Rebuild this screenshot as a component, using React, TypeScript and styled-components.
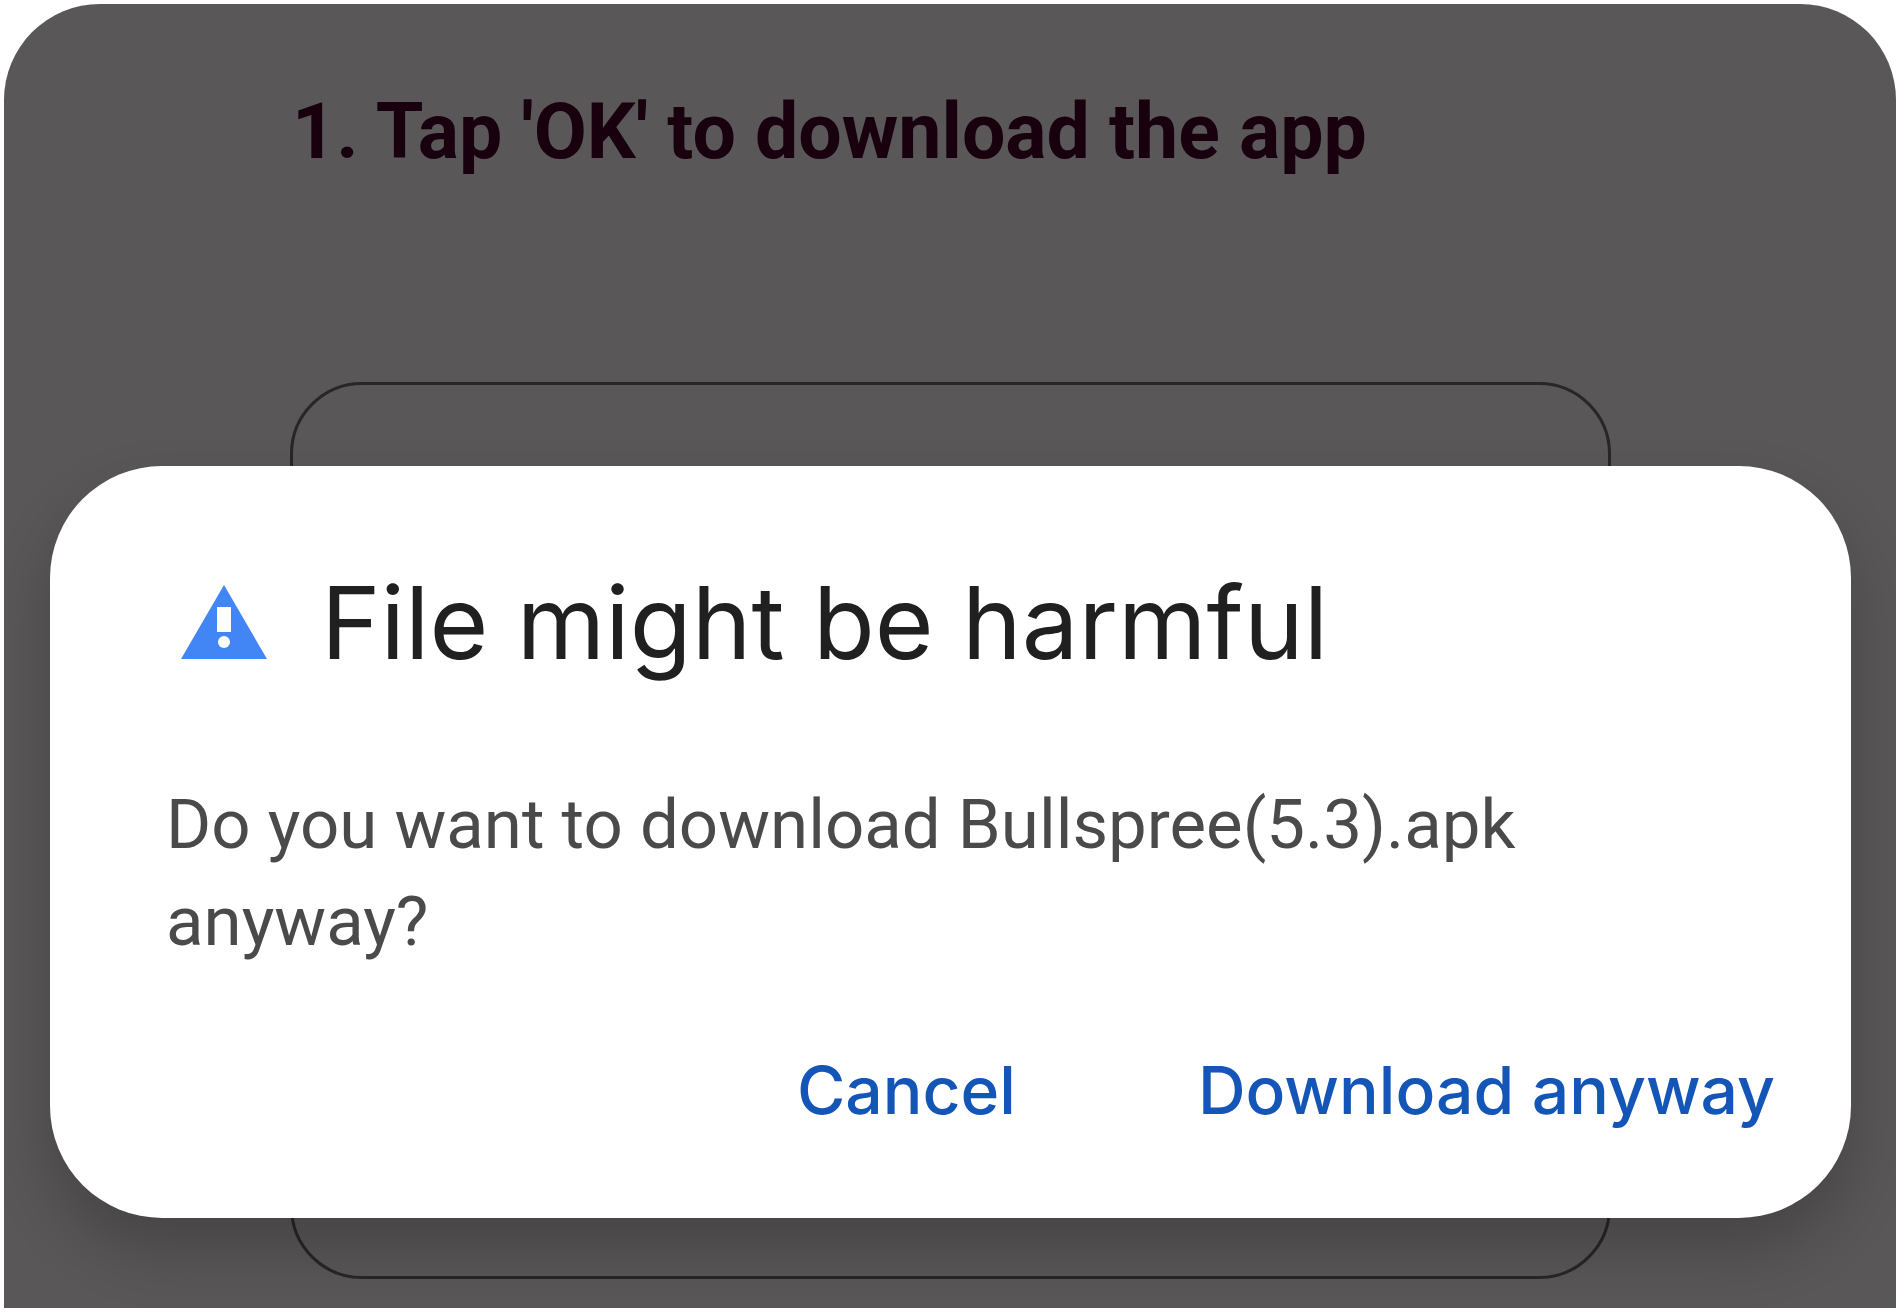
import React from "react";
import styled, { createGlobalStyle } from "styled-components";

const GlobalStyle = createGlobalStyle`
  *, *::before, *::after { box-sizing: border-box; }
  body { margin: 0; background: #fff; }
`;

const Page = styled.main`
  min-height: 100vh;
  padding: 4px;
  display: grid;
`;

const Screen = styled.div`
  display: grid;
  grid-template-columns: minmax(0, 1fr);
  background: #5a5758;
  border-radius: 96px 96px 0 0;
  overflow: hidden;
`;

const Instructions = styled.section`
  grid-area: 1 / 1;
  display: flex;
  flex-direction: column;
  gap: 202px;
  padding: 80px 285px 29px 286px;
`;

const StepTitle = styled.h1`
  margin: 0;
  padding-left: 2px;
  font: 700 77px/96px Roboto, sans-serif;
  color: #18000f;
`;

const StepFrame = styled.div`
  flex: 1;
  border: 3px solid #282627;
  border-radius: 72px;
`;

const Dialog = styled.section`
  grid-area: 1 / 1;
  position: relative;
  align-self: start;
  display: flex;
  flex-direction: column;
  margin: 462px 45px 90px 46px;
  padding: 104px 76px 80px 116px;
  background: #fff;
  border-radius: 112px;
  box-shadow: 0 32px 60px rgba(0, 0, 0, 0.22);
`;

const TitleRow = styled.header`
  display: flex;
  align-items: center;
  gap: 54px;
  padding-left: 15px;
`;

const WarningIcon = styled.svg`
  flex: none;
  width: 86px;
  height: 74px;
`;

const Title = styled.h2`
  margin: 0;
  font: 400 101px/104px Inter, sans-serif;
  color: #202020;
`;

const Message = styled.p`
  margin: 102px 0 0;
  padding-right: 120px;
  font: 400 69px/97px Roboto, sans-serif;
  color: #4a4a4a;
`;

const Actions = styled.footer`
  display: flex;
  justify-content: flex-end;
  gap: 182px;
  margin-top: 72px;
`;

const Action = styled.button`
  padding: 0;
  border: 0;
  background: none;
  font: 500 66px/96px Inter, sans-serif;
  color: #1455b8;
  cursor: pointer;
`;

export default function App() {
  return (
    <>
      <GlobalStyle />
      <Page>
        <Screen>
          <Instructions>
            <StepTitle>1. Tap 'OK' to download the app</StepTitle>
            <StepFrame />
          </Instructions>
          <Dialog role="dialog" aria-labelledby="dialog-title" aria-describedby="dialog-message">
            <TitleRow>
              <WarningIcon viewBox="0 0 86 74" aria-hidden="true">
                <path d="M43 0 86 74H0Z" fill="#4285f4" />
                <path d="M36 22H50V47H36Z" fill="#fff" />
                <circle cx="43" cy="57" r="6" fill="#fff" />
              </WarningIcon>
              <Title id="dialog-title">File might be harmful</Title>
            </TitleRow>
            <Message id="dialog-message">
              Do you want to download Bullspree(5.3).apk anyway?
            </Message>
            <Actions>
              <Action type="button">Cancel</Action>
              <Action type="button">Download anyway</Action>
            </Actions>
          </Dialog>
        </Screen>
      </Page>
    </>
  );
}
